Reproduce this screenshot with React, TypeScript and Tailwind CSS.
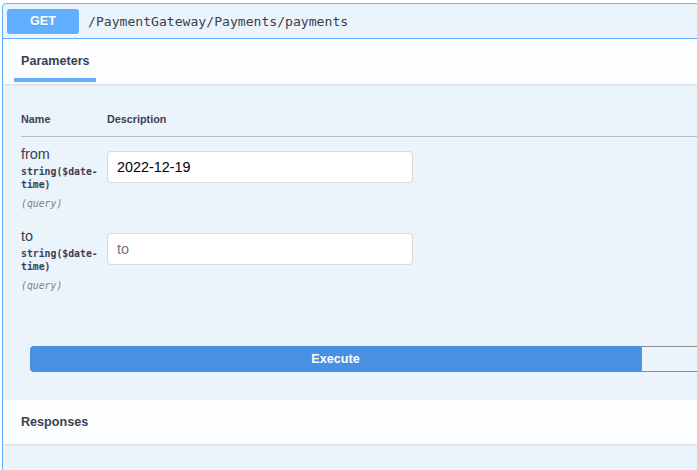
import React from "react";

const sans = { fontFamily: '"Liberation Sans", Arial, sans-serif' };

function ParamRow({ name, value, placeholder }: { name: string; value?: string; placeholder: string }) {
  return (
    <div className="flex pt-[8px] pb-[9px]">
      <div className="w-[86px] shrink-0 text-[#3b4151]">
        <div className="text-[14.4px] leading-[18px]">{name}</div>
        <div className="mt-[2px] font-['DejaVu_Sans_Mono',monospace] text-[9.8px] font-semibold leading-[13px] w-[80px] break-all">
          string($date-time)
        </div>
        <div className="font-['DejaVu_Sans_Mono',monospace] text-[9.8px] italic leading-[13px] mt-[6px] text-[#808080]">
          (query)
        </div>
      </div>
      <div className="pt-[6px]">
        <input
          readOnly
          defaultValue={value}
          placeholder={placeholder}
          className="w-[306px] h-[32px] bg-white border border-[#d9d9d9] rounded-[4px] px-[9px] text-[14.4px] text-black placeholder:text-[#757575] outline-none font-['Liberation_Sans',Arial,sans-serif]"
        />
      </div>
    </div>
  );
}

export default function App() {
  return (
    <div className="w-[697px] h-[470px] overflow-hidden bg-white" style={sans}>
      <div className="ml-[2px] mt-[3px] w-[1290px] h-[600px] border border-[#61affe] rounded-[4px] bg-[#ebf3fb]">
        {/* summary */}
        <div className="flex items-start h-[35px] pt-[5px] pl-[4px] border-b border-[#61affe]">
          <div className="w-[72px] h-[25px] rounded-[3px] bg-[#61affe] text-white font-bold text-[12.6px] flex items-center justify-center [text-shadow:0_1px_0_rgba(0,0,0,0.1)]">
            GET
          </div>
          <div className="ml-[9px] h-[25px] flex items-center font-['DejaVu_Sans_Mono',monospace] text-[13.1px] text-[#3b4151]">
            /PaymentGateway/Payments/payments
          </div>
        </div>

        {/* parameters header */}
        <div className="h-[45px] bg-white/80 shadow-[0_1px_2px_rgba(0,0,0,0.1)] pl-[11px] relative">
          <div className="inline-flex flex-col w-[82px]">
            <div className="pt-[14px] pl-[7px] text-[12.6px] font-bold leading-[16px] text-[#3b4151]">Parameters</div>
            <div className="mt-[9px] h-[4px] bg-[#61affe]" />
          </div>
        </div>

        {/* table */}
        <div className="pl-[18px] pt-[28px]">
          <div className="flex pb-[10px] border-b border-[rgba(59,65,81,0.3)] text-[10.8px] font-bold leading-[14px] text-[#3b4151]">
            <div className="w-[86px]">Name</div>
            <div>Description</div>
          </div>
          <ParamRow name="from" value="2022-12-19" placeholder="from" />
          <ParamRow name="to" placeholder="to" />
        </div>

        {/* execute */}
        <div className="flex pl-[27px] pt-[45px]">
          <button className="w-[611px] h-[26px] bg-[#4990e2] text-white font-bold text-[12.6px] rounded-l-[4px] flex items-center justify-center">
            Execute
          </button>
          <button aria-label="Clear" className="w-[611px] h-[26px] border border-[#8a8a8a] rounded-r-[4px]" />
        </div>

        {/* responses */}
        <div className="mt-[28px] h-[44px] bg-white/80 shadow-[0_1px_2px_rgba(0,0,0,0.1)] pl-[18px] flex items-center text-[12.6px] font-bold text-[#3b4151]">
          Responses
        </div>
      </div>
    </div>
  );
}
